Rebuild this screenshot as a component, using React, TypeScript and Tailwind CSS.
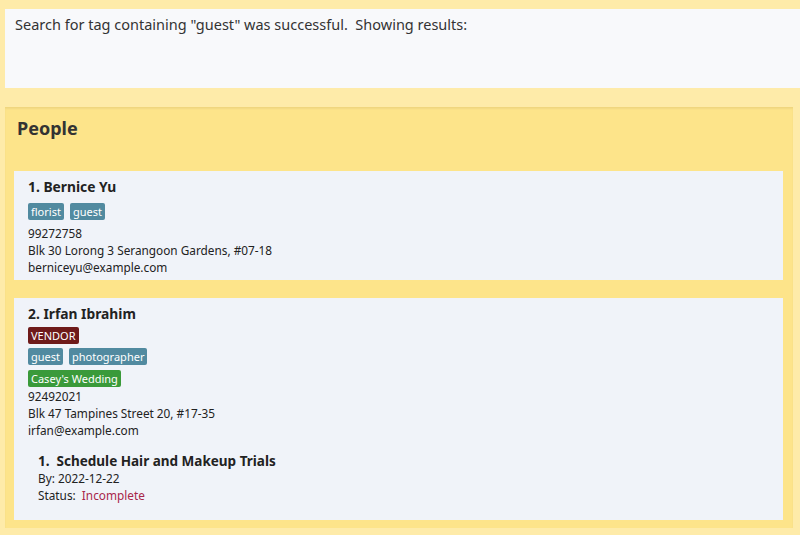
import React from 'react';

type Person = {
  name: string;
  roles: string[];
  tags: string[];
  weddings: string[];
  phone: string;
  address: string;
  email: string;
  tasks: { title: string; by: string; status: string }[];
};

const people: Person[] = [
  {
    name: 'Bernice Yu',
    roles: [],
    tags: ['florist', 'guest'],
    weddings: [],
    phone: '99272758',
    address: 'Blk 30 Lorong 3 Serangoon Gardens, #07-18',
    email: 'berniceyu@example.com',
    tasks: [],
  },
  {
    name: 'Irfan Ibrahim',
    roles: ['VENDOR'],
    tags: ['guest', 'photographer'],
    weddings: ["Casey's Wedding"],
    phone: '92492021',
    address: 'Blk 47 Tampines Street 20, #17-35',
    email: 'irfan@example.com',
    tasks: [{ title: 'Schedule Hair and Makeup Trials', by: '2022-12-22', status: 'Incomplete' }],
  },
];

function Chip({ label, color }: { label: string; color: string }) {
  return (
    <span className={`${color} text-white text-[11px] leading-[17px] px-[3px] rounded-[2px]`}>{label}</span>
  );
}

function PersonCard({ p, index }: { p: Person; index: number }) {
  const hasRole = p.roles.length > 0;
  return (
    <div className="bg-[#f0f3f9] pl-[14px] pr-4 pt-[7px] pb-[4px] text-[#222] text-[11.8px] leading-[17px]">
      <div className="font-bold text-[13.8px] leading-[18px] mb-[1px]">
        {index}. {p.name}
      </div>
      {hasRole && (
        <div className="flex gap-[6px] mt-[4px] mb-[4px]">
          {p.roles.map((r) => (
            <Chip key={r} label={r} color="bg-[#6e1a1a]" />
          ))}
        </div>
      )}
      <div className={`flex gap-[6px] mb-[5px] ${hasRole ? 'mt-[4px]' : 'mt-[7px]'}`}>
        {p.tags.map((t) => (
          <Chip key={t} label={t} color="bg-[#518aa0]" />
        ))}
      </div>
      {p.weddings.length > 0 && (
        <div className="flex gap-[6px] mb-[1px]">
          {p.weddings.map((w) => (
            <Chip key={w} label={w} color="bg-[#3a9a3a]" />
          ))}
        </div>
      )}
      <div>{p.phone}</div>
      <div>{p.address}</div>
      <div>{p.email}</div>
      {p.tasks.map((t, i) => (
        <div key={t.title} className="pl-[10px] pt-[13px] pb-[12px]">
          <div className="font-bold text-[13.5px] leading-[18px]">
            {i + 1}.&nbsp; {t.title}
          </div>
          <div>By: {t.by}</div>
          <div>
            Status:&nbsp; <span className="text-[#a8264a]">{t.status}</span>
          </div>
        </div>
      ))}
    </div>
  );
}

export default function App() {
  return (
    <div
      className="w-[800px] h-[535px] bg-[#feeba9] pt-[9px] overflow-hidden"
      style={{ fontFamily: '"Noto Sans", "Open Sans", sans-serif' }}
    >
      <div className="ml-[5px] h-[79px] bg-[#f8f9fb] px-[10px] pt-[5px] text-[14.5px] text-[#333] whitespace-pre">
        {'Search for tag containing "guest" was successful.  Showing results:'}
      </div>
      <div className="mt-[19px] ml-[5px] mr-[7px] h-[421px] bg-[#fde48a] border-t border-[#f0d67e] shadow-[inset_0_1px_2px_rgba(0,0,0,0.05)] px-[9px] pr-[10px]">
        <div className="pt-[7px] h-[63px] text-[18px] font-bold text-[#333] pl-[3px]">People</div>
        <div className="flex flex-col gap-[18px]">
          {people.map((p, i) => (
            <PersonCard key={p.name} p={p} index={i + 1} />
          ))}
        </div>
      </div>
    </div>
  );
}
